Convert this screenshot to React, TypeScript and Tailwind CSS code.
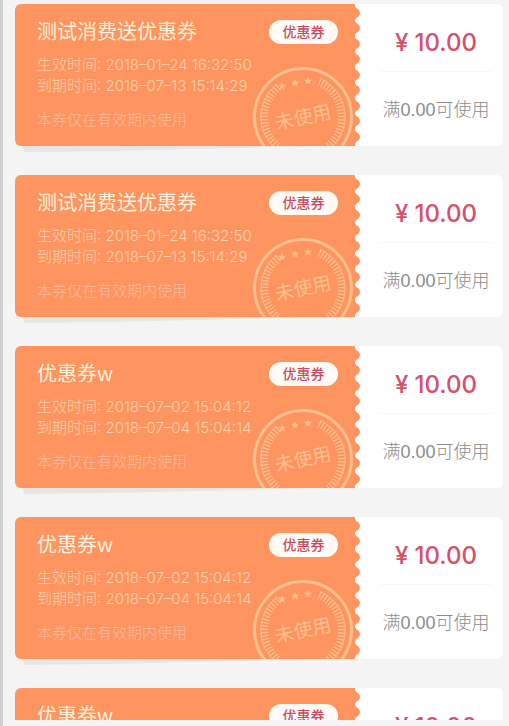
import React from "react";

type Coupon = { name: string; start: string; end: string };

const coupons: Coupon[] = [
  { name: "测试消费送优惠券", start: "2018–01–24 16:32:50", end: "2018–07–13 15:14:29" },
  { name: "测试消费送优惠券", start: "2018–01–24 16:32:50", end: "2018–07–13 15:14:29" },
  { name: "优惠券w", start: "2018–07–02 15:04:12", end: "2018–07–04 15:04:14" },
  { name: "优惠券w", start: "2018–07–02 15:04:12", end: "2018–07–04 15:04:14" },
  { name: "优惠券w", start: "2018–07–02 15:04:12", end: "2018–07–04 15:04:14" },
];

function Stamp() {
  const star = "M0 -4 L1.2 -1.3 L4 -1.2 L1.8 0.7 L2.5 3.5 L0 1.9 L-2.5 3.5 L-1.8 0.7 L-4 -1.2 L-1.2 -1.3 Z";
  return (
    <svg
      className="absolute right-px -bottom-[22px] size-[102px] text-[#ffbf90]"
      viewBox="-51 -51 102 102"
      fill="none"
      stroke="currentColor"
      aria-label="未使用"
    >
      <circle r="48.5" strokeWidth="3" />
      <path d="M-26 -33 A42 42 0 0 0 -26 33" strokeWidth="1" />
      <path d="M17 -38.5 A42 42 0 0 1 26 33" strokeWidth="1" />
      <path d="M-24.5 -30 A38.5 38.5 0 0 0 -24.5 30" strokeWidth="8" strokeDasharray="1.3 2" />
      <path d="M16 -35 A38.5 38.5 0 0 1 24.5 30" strokeWidth="8" strokeDasharray="1.3 2" />
      <g fill="currentColor" stroke="none">
        <path d={star} transform="translate(-21 -31)" />
        <path d={star} transform="translate(-8 -34)" />
        <path d={star} transform="translate(5 -36)" />
        <text
          transform="rotate(-12)"
          textAnchor="middle"
          y="7"
          fontSize="19"
          className="font-['Noto_Sans_CJK_SC',sans-serif] font-normal"
        >
          未使用
        </text>
      </g>
    </svg>
  );
}

function Perforation() {
  const bumps = [9, 24, 40, 55, 71, 86, 102, 117, 133];
  return (
    <svg className="h-full w-[6px] shrink-0" viewBox="0 0 6 142" preserveAspectRatio="none" aria-hidden="true">
      {bumps.map((y) => (
        <path key={y} d={`M0 ${y - 7} Q1 ${y - 4} 3 ${y - 4} Q7 ${y} 3 ${y + 4} Q1 ${y + 4} 0 ${y + 7} Z`} fill="#fe945f" />
      ))}
    </svg>
  );
}

function CouponCard({ coupon }: { coupon: Coupon }) {
  return (
    <li className="relative h-[142px] shrink-0">
      <div className="absolute top-[136px] left-1 h-3 w-3/5 bg-[#e6e6e7] [clip-path:polygon(0_0,100%_0,100%_50%,35%_90%,2%_100%)]" />
      <article className="relative flex h-full overflow-hidden rounded-md bg-white">
        <div className="relative flex-1 overflow-hidden bg-[#fe945f] pl-[22px]">
          <h2 className="mt-[11px] text-xl leading-8 text-[#fff1dc]">{coupon.name}</h2>
          <div className="mt-[7px] font-['Inter','Noto_Sans_CJK_SC',sans-serif] text-[15px] leading-[21px] font-light whitespace-nowrap text-[#ffcfac]">
            <p>生效时间: {coupon.start}</p>
            <p>到期时间: {coupon.end}</p>
          </div>
          <p className="mt-3 text-[15px] leading-[21px] font-light text-[#ffb9a0]">本券仅在有效期内使用</p>
          <span className="absolute top-4 right-[17px] flex h-6 w-[69px] items-center justify-center rounded-full bg-[#fffaf5] pb-[2px] text-sm font-medium text-[#cb4a60]">
            优惠券
          </span>
          <Stamp />
        </div>
        <Perforation />
        <div className="flex w-[142px] shrink-0 flex-col items-center pl-2">
          <p className="mt-[23px] flex items-center gap-[6px] font-['Inter','Noto_Sans_CJK_SC',sans-serif] text-2xl leading-8 font-medium text-[#d6506a]">
            <span>¥</span>
            <span>10.00</span>
          </p>
          <hr className="mt-3 w-[112px] border-[#f7f7f7]" />
          <p className="mt-[22px] font-['Liberation_Sans','Noto_Sans_CJK_SC',sans-serif] text-lg leading-8 font-light text-[#8c8c8c]">
            满0.00可使用
          </p>
        </div>
      </article>
    </li>
  );
}

export default function App() {
  return (
    <main className="h-screen overflow-hidden border-l-[3px] border-[#cfd0d3] bg-[#f4f4f5] pb-[6px] font-['Noto_Sans_CJK_SC',sans-serif]">
      <ul className="flex h-full flex-col gap-[29px] overflow-hidden pt-1 pr-[6px] pl-3">
        {coupons.map((coupon, i) => (
          <CouponCard key={i} coupon={coupon} />
        ))}
      </ul>
    </main>
  );
}
